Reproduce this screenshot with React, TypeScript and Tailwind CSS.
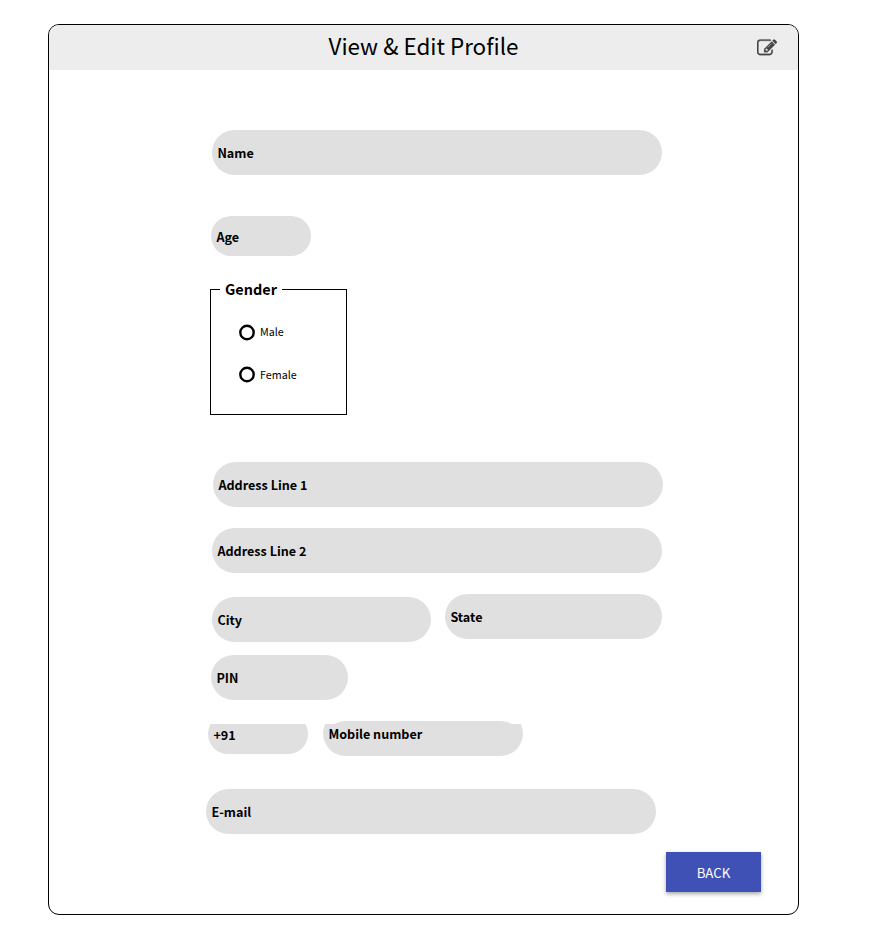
import type { ReactNode } from "react";

function Field({ label, className }: { label: string; className: string }) {
  return (
    <label className={`flex items-center rounded-full bg-[#e0e0e0] pl-[5.4px] text-[12.6px] font-bold leading-[20px] ${className}`}>
      <span className="whitespace-nowrap">{label}</span>
    </label>
  );
}

function Radio({ children }: { children: ReactNode }) {
  return (
    <div className="flex h-4 items-center gap-[5px] text-[10.75px] leading-4">
      <svg className="h-[17px] w-4 shrink-0" viewBox="0 0 16 17" fill="none" stroke="#000" strokeWidth="2.4">
        <circle cx="8" cy="8.5" r="6.7" />
      </svg>
      <span>{children}</span>
    </div>
  );
}

function EditIcon() {
  return (
    <svg className="mt-px size-5" viewBox="0 0 1792 1792" fill="#444" stroke="#444" strokeWidth="24">
      <path d="M888 1184l116-116-152-152-116 116v56h96v96h56zm440-720q-16-16-33 1l-350 350q-17 17-1 33t33-1l350-350q17-17 1-33zm80 594v190q0 119-84.5 203.5t-203.5 84.5h-832q-119 0-203.5-84.5t-84.5-203.5v-832q0-119 84.5-203.5t203.5-84.5h832q63 0 117 25 15 7 18 23 3 17-9 29l-49 49q-14 14-32 8-23-6-45-6h-832q-66 0-113 47t-47 113v832q0 66 47 113t113 47h832q66 0 113-47t47-113v-126q0-13 9-22l64-64q15-15 35-7t20 29zm-96-738l288 288-672 672h-288v-288zm444 132l-92 92-288-288 92-92q28-28 68-28t68 28l152 152q28 28 28 68t-28 68z" />
    </svg>
  );
}

export default function App() {
  return (
    <div className="h-[948px] w-[891px] bg-white pl-12 pt-6 font-['Noto_Sans_CJK_SC',sans-serif] text-black">
      <main className="flex h-[891px] w-[751px] flex-col overflow-hidden rounded-[11px] border border-black">
        <header className="grid h-[45px] shrink-0 grid-cols-[1fr_auto_1fr] items-center bg-[#ededed]">
          <h1 className="col-start-2 pb-[5px] text-[22.45px] leading-[36px]">View &amp; Edit Profile</h1>
          <div className="flex justify-end pr-[21.5px]">
            <EditIcon />
          </div>
        </header>
        <form className="flex flex-col items-start pl-[157px]">
          <Field label="Name" className="ml-[6px] mt-[60px] h-[45px] w-[450px]" />
          <Field label="Age" className="ml-[5px] mt-[41px] h-10 w-[100px] pt-px" />
          <fieldset className="ml-1 mt-[22px] h-[137px] w-[137px] border border-black pl-[28px]">
            <legend className="-ml-[19px] h-[23px] px-[5px] text-[14.45px] font-bold leading-[21px]">Gender</legend>
            <div className="mt-[23px] flex flex-col gap-[26px]">
              <Radio>Male</Radio>
              <Radio>
                <span className="inline-block pt-px">Female</span>
              </Radio>
            </div>
          </fieldset>
          <Field label="Address Line 1" className="ml-[7px] mt-[47px] h-[45px] w-[450px]" />
          <Field label="Address Line 2" className="ml-[6px] mt-[21px] h-[45px] w-[450px]" />
          <div className="ml-[6px] mt-[21px] flex items-start gap-[14px]">
            <Field label="City" className="mt-[3px] h-[45px] w-[219px]" />
            <Field label="State" className="h-[45px] w-[217px]" />
          </div>
          <Field label="PIN" className="ml-[5px] mt-[13px] h-[45px] w-[137px]" />
          <div className="ml-[2px] mt-[21px] grid grid-cols-[100px_200px] items-start gap-x-[15px]">
            <div className="mt-[3px] flex h-[30px] items-end overflow-hidden">
              <Field label="+91" className="h-10 w-[100px] shrink-0 pt-px" />
            </div>
            <div className="grid items-start">
              <div className="col-start-1 row-start-1 mt-[3px] flex h-8 items-end overflow-hidden">
                <span className="h-[45px] w-[200px] shrink-0 rounded-full bg-[#e0e0e0]" />
              </div>
              <div className="col-start-1 row-start-1 flex h-[13px] items-start overflow-hidden">
                <span className="h-[45px] w-[200px] shrink-0 rounded-full bg-[#e0e0e0]" />
              </div>
              <label className="col-start-1 row-start-1 mt-[3px] pl-[5.4px] text-[12.6px] font-bold leading-[20px]">
                Mobile number
              </label>
            </div>
          </div>
          <Field label="E-mail" className="mt-[33px] h-[45px] w-[450px]" />
        </form>
        <button className="mr-[37px] mt-[18px] h-10 w-[95px] shrink-0 self-end bg-[#3f51b5] pt-[2px] text-[13.3px] leading-5 text-white shadow-[0_2px_4px_rgba(0,0,0,0.35)]">
          BACK
        </button>
      </main>
    </div>
  );
}
